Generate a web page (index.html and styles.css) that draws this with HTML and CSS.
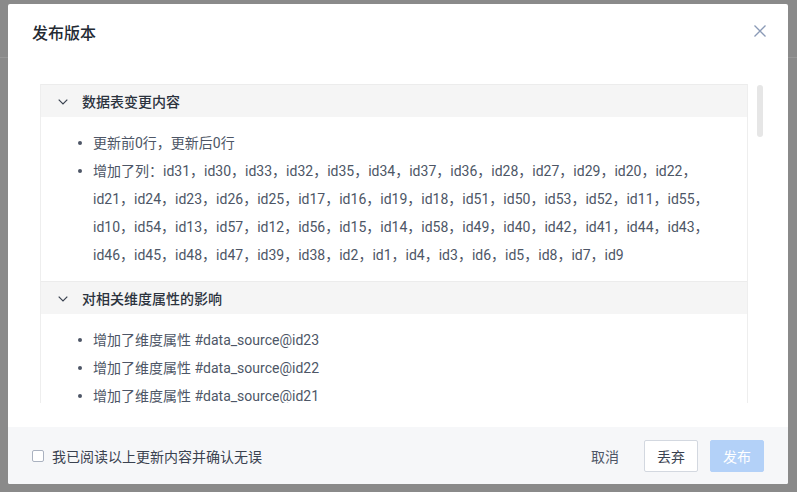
FILE: index.html
```html
<!DOCTYPE html>
<html lang="zh-CN">
<head>
<meta charset="utf-8">
<title>发布版本</title>
<link rel="stylesheet" href="styles.css">
</head>
<body>
<div class="modal">
  <div class="modal-header">
    <div class="modal-title">发布版本</div>
    <svg class="close" width="12" height="12" viewBox="0 0 12 12"><path d="M0.5 0.5L11.5 11.5M11.5 0.5L0.5 11.5" stroke="#8a9ab6" stroke-width="1.3" fill="none"/></svg>
  </div>
  <div class="modal-body">
    <div class="scroll">
      <div class="panel">
        <div class="section">
          <div class="section-head">
            <svg class="chev" width="10" height="6" viewBox="0 0 10 6"><path d="M0.7 0.7L5 5L9.3 0.7" stroke="#3a4250" stroke-width="1.2" fill="none"/></svg>
            <span>数据表变更内容</span>
          </div>
          <ul class="list">
            <li>更新前0行，更新后0行</li>
            <li>增加了列：id31，id30，id33，id32，id35，id34，id37，id36，id28，id27，id29，id20，id22，id21，id24，id23，id26，id25，id17，id16，id19，id18，id51，id50，id53，id52，id11，id55，id10，id54，id13，id57，id12，id56，id15，id14，id58，id49，id40，id42，id41，id44，id43，id46，id45，id48，id47，id39，id38，id2，id1，id4，id3，id6，id5，id8，id7，id9</li>
          </ul>
        </div>
        <div class="section">
          <div class="section-head">
            <svg class="chev" width="10" height="6" viewBox="0 0 10 6"><path d="M0.7 0.7L5 5L9.3 0.7" stroke="#3a4250" stroke-width="1.2" fill="none"/></svg>
            <span>对相关维度属性的影响</span>
          </div>
          <ul class="list">
            <li>增加了维度属性 #data_source@id23</li>
            <li>增加了维度属性 #data_source@id22</li>
            <li>增加了维度属性 #data_source@id21</li>
          </ul>
        </div>
      </div>
      <div class="thumb"></div>
    </div>
  </div>
  <div class="modal-footer">
    <label class="check"><span class="box"></span><span>我已阅读以上更新内容并确认无误</span></label>
    <div class="actions">
      <button class="btn btn-text">取消</button>
      <button class="btn btn-default">丢弃</button>
      <button class="btn btn-primary">发布</button>
    </div>
  </div>
</div>
</body>
</html>
```
FILE: styles.css
```css
html, body {
  margin: 0;
  padding: 0;
}
body {
  width: 797px;
  height: 492px;
  box-sizing: border-box;
  padding: 4px 9px 8px 8px;
  background: linear-gradient(to bottom, #8a8a8a 0, #8a8a8a 57px, #979797 57px, #979797 58px, #8a8a8a 58px);
  font-family: Roboto, "Noto Sans CJK SC", sans-serif;
  overflow: hidden;
}
.modal {
  width: 780px;
  height: 480px;
  background: #ffffff;
  border-radius: 2px;
  display: flex;
  flex-direction: column;
  overflow: hidden;
}
.modal-header {
  height: 56px;
  box-sizing: border-box;
  padding: 16px 22px 0 24px;
  display: flex;
  justify-content: space-between;
  align-items: flex-start;
}
.modal-title {
  font-size: 16px;
  line-height: 24px;
  font-weight: 500;
  color: #242a33;
  font-family: "Noto Sans CJK SC", sans-serif;
}
.close {
  margin-top: 5px;
}
.modal-body {
  flex: 1;
  padding: 24px 24px 24px 32px;
  min-height: 0;
  display: flex;
}
.scroll {
  position: relative;
  flex: 1;
  overflow: hidden;
  padding-right: 16px;
}
.thumb {
  position: absolute;
  top: 1px;
  right: 1px;
  width: 6px;
  height: 52px;
  border-radius: 3px;
  background: #e6e6e6;
}
.panel {
  border-left: 1px solid #eeeeee;
  border-right: 1px solid #eeeeee;
}
.section-head {
  height: 32px;
  border-top: 1px solid #ececec;
  background: #f5f5f5;
  display: flex;
  align-items: center;
  padding-left: 17px;
  font-size: 14px;
  font-weight: 500;
  color: #2b323d;
}
.chev {
  margin-right: 14px;
  margin-top: 1px;
}
.list {
  list-style: none;
  margin: 0;
  padding: 12px 26px 12px 52px;
}
.list li {
  position: relative;
  font-size: 14px;
  line-height: 28px;
  color: #4d5666;
}
.list li::before {
  content: "";
  position: absolute;
  left: -15px;
  top: 12px;
  width: 4px;
  height: 4px;
  border-radius: 50%;
  background: #4d5666;
}
.modal-footer {
  height: 57px;
  box-sizing: border-box;
  background: #f6f7f9;
  padding: 0 24px 0 24px;
  display: flex;
  align-items: center;
  justify-content: space-between;
}
.check {
  display: flex;
  align-items: center;
  font-size: 14px;
  color: #3a4250;
  gap: 8px;
}
.box {
  width: 12px;
  height: 12px;
  box-sizing: border-box;
  border: 1px solid #aab2c0;
  border-radius: 2px;
  background: #ffffff;
}
.actions {
  display: flex;
  gap: 12px;
  margin-top: 1px;
}
.btn {
  height: 32px;
  padding: 0 12px;
  font-size: 14px;
  font-family: "Noto Sans CJK SC", sans-serif;
  border-radius: 2px;
  border: 1px solid transparent;
  background: transparent;
  box-sizing: border-box;
  white-space: nowrap;
}
.btn-text {
  color: #4d5666;
}
.btn-default {
  background: #ffffff;
  border-color: #d3d8e0;
  color: #3a4250;
}
.btn-primary {
  background: #b3d1f8;
  border-color: #b3d1f8;
  color: #ffffff;
}
```
